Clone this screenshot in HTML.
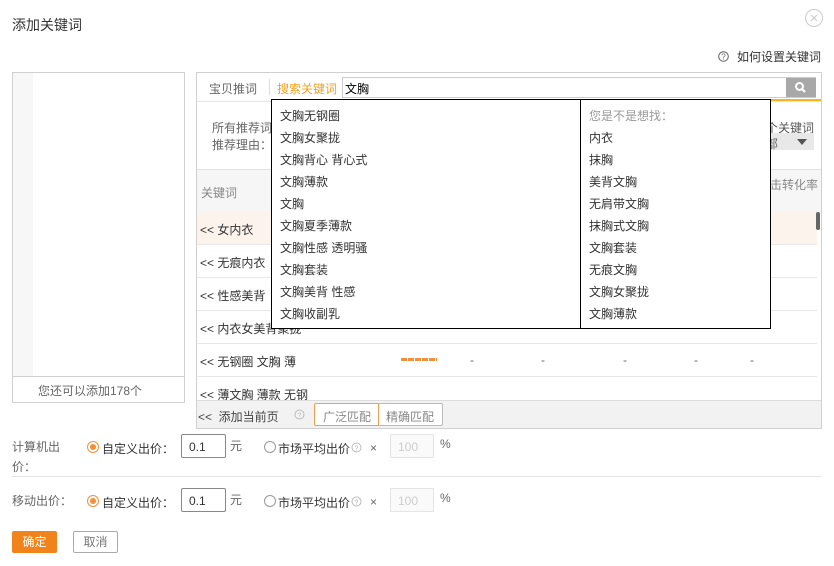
<!DOCTYPE html>
<html><head><meta charset="utf-8"><style>
*{margin:0;padding:0;box-sizing:border-box}
body{width:834px;height:566px;background:#fff;font-family:"Liberation Sans","Noto Sans CJK SC",sans-serif;font-size:12px;color:#333;position:relative;overflow:hidden}
.a{position:absolute;white-space:nowrap}
.g{color:#666}
</style></head><body>
<div class="a" style="left:12px;top:15px;font-size:14px;color:#333">添加关键词</div>
<svg class="a" style="left:804px;top:8px" width="20" height="20"><circle cx="10" cy="10" r="8.5" fill="none" stroke="#ccc"/><path d="M7 7L13 13M13 7L7 13" stroke="#ccc" stroke-width="1.2"/></svg>
<svg class="a" style="left:718px;top:51px" width="11" height="11"><circle cx="5.5" cy="5.5" r="4.8" fill="none" stroke="#666"/><text x="5.5" y="8.5" font-size="8" text-anchor="middle" fill="#666" font-family="Liberation Sans">?</text></svg>
<div class="a" style="left:737px;top:48px;color:#333">如何设置关键词</div>

<div class="a" style="left:12px;top:72px;width:173px;height:331px;border:1px solid #d0d0d0"></div>
<div class="a" style="left:13px;top:73px;width:20px;height:303px;background:#f7f7f7"></div>
<div class="a" style="left:13px;top:376px;width:171px;height:1px;background:#d0d0d0"></div>
<div class="a g" style="left:38px;top:382px">您还可以添加178个</div>

<div class="a" style="left:196px;top:72px;width:626px;height:357px;border:1px solid #d0d0d0"></div>
<div class="a" style="left:197px;top:101px;width:624px;height:1px;background:#e5e5e5"></div>
<div class="a g" style="left:209px;top:80px">宝贝推词</div>
<div class="a" style="left:269px;top:79px;width:1px;height:16px;background:#ddd"></div>
<div class="a" style="left:277px;top:80px;color:#f0a020">搜索关键词</div>
<div class="a" style="left:342px;top:77px;width:474px;height:21px;border:1px solid #ccc"></div>
<div class="a" style="left:345px;top:80px;color:#000">文胸</div>
<div class="a" style="left:786px;top:78px;width:30px;height:19px;background:#a8a8a8"></div>
<svg class="a" style="left:794px;top:81px" width="13" height="13"><circle cx="5.5" cy="5.5" r="3.5" fill="none" stroke="#fff" stroke-width="2"/><path d="M8 8L11 11" stroke="#fff" stroke-width="2.2"/></svg>
<div class="a" style="left:343px;top:99px;width:478px;height:2px;background:#f4b71d"></div>

<div class="a g" style="left:212px;top:119px">所有推荐词</div>
<div class="a g" style="left:212px;top:136px">推荐理由：</div>
<div class="a" style="left:766px;top:119px;color:#555">个关键词</div>
<div class="a" style="left:766px;top:133px;width:48px;height:17px;background:#e8e8e8"></div>
<div class="a g" style="left:766px;top:135px">部</div>
<div class="a" style="left:797px;top:139px;width:0;height:0;border-left:5px solid transparent;border-right:5px solid transparent;border-top:6px solid #555"></div>

<div class="a" style="left:197px;top:169px;width:624px;height:43px;background:#f6f6f6;border-top:1px solid #e2e2e2"></div>
<div class="a" style="left:201px;top:184px;color:#888">关键词</div>
<div class="a" style="left:770px;top:176px;color:#888">击转化率</div>

<div class="a" style="left:197px;top:212px;width:620px;height:32px;background:#fcf3ec"></div>
<div class="a" style="left:816px;top:212px;width:4px;height:18px;background:#666;border-radius:2px"></div>
<div class="a" style="left:200px;top:221px">&lt;&lt; 女内衣</div>
<div class="a" style="left:197px;top:244px;width:620px;height:1px;background:#e8e8e8"></div>
<div class="a" style="left:200px;top:254px">&lt;&lt; 无痕内衣</div>
<div class="a" style="left:197px;top:277px;width:620px;height:1px;background:#e8e8e8"></div>
<div class="a" style="left:200px;top:287px">&lt;&lt; 性感美背</div>
<div class="a" style="left:197px;top:310px;width:620px;height:1px;background:#e8e8e8"></div>
<div class="a" style="left:200px;top:320px">&lt;&lt; 内衣女美背聚拢</div>
<div class="a" style="left:197px;top:343px;width:620px;height:1px;background:#e8e8e8"></div>
<div class="a" style="left:200px;top:353px">&lt;&lt; 无钢圈 文胸 薄</div>
<div class="a" style="left:401px;top:358px;width:36px;height:3px;background:repeating-linear-gradient(90deg,#f0903a 0 6px,#fff 6px 7px)"></div>
<div class="a g" style="left:470px;top:353px">-</div>
<div class="a g" style="left:541px;top:353px">-</div>
<div class="a g" style="left:623px;top:353px">-</div>
<div class="a g" style="left:694px;top:353px">-</div>
<div class="a g" style="left:750px;top:353px">-</div>
<div class="a" style="left:197px;top:376px;width:620px;height:1px;background:#e8e8e8"></div>
<div class="a" style="left:200px;top:386px">&lt;&lt; 薄文胸 薄款 无钢</div>

<div class="a" style="left:197px;top:400px;width:624px;height:28px;background:#f2f2f2;border-top:1px solid #ddd"></div>
<div class="a" style="left:198px;top:408px;color:#444">&lt;&lt;&nbsp; 添加当前页</div>
<svg class="a" style="left:294px;top:409px" width="11" height="11"><circle cx="5.5" cy="5.5" r="4.5" fill="none" stroke="#bbb"/><text x="5.5" y="8.3" font-size="7" text-anchor="middle" fill="#bbb">?</text></svg>
<div class="a" style="left:379px;top:403px;width:64px;height:23px;border:1px solid #bbb;border-left:none;border-radius:0 2px 2px 0;background:#fff"></div>
<div class="a" style="left:314px;top:403px;width:65px;height:23px;border:1px solid #f0a050;border-radius:2px 0 0 2px;background:#fff"></div>
<div class="a" style="left:323px;top:408px;color:#888">广泛匹配</div>
<div class="a" style="left:386px;top:408px;color:#888">精确匹配</div>

<div class="a" style="left:271px;top:99px;width:500px;height:230px;border:1px solid #000;background:#fff"></div>
<div class="a" style="left:580px;top:100px;width:1px;height:228px;background:#000"></div>
<div class="a" style="left:280px;top:105px;line-height:22px;color:#333">文胸无钢圈<br>文胸女聚拢<br>文胸背心 背心式<br>文胸薄款<br>文胸<br>文胸夏季薄款<br>文胸性感 透明骚<br>文胸套装<br>文胸美背 性感<br>文胸收副乳</div>
<div class="a" style="left:589px;top:105px;line-height:22px;color:#333"><span style="color:#999">您是不是想找：</span><br>内衣<br>抹胸<br>美背文胸<br>无肩带文胸<br>抹胸式文胸<br>文胸套装<br>无痕文胸<br>文胸女聚拢<br>文胸薄款</div>

<div class="a g" style="left:12px;top:438px">计算机出</div>
<div class="a g" style="left:12px;top:458px">价：</div>
<div class="a" style="left:87px;top:441px;width:12px;height:12px;border:1px solid #f0903a;border-radius:50%"></div>
<div class="a" style="left:90px;top:444px;width:6px;height:6px;background:#f0903a;border-radius:50%"></div>
<div class="a" style="left:102px;top:440px">自定义出价：</div>
<div class="a" style="left:181px;top:434px;width:45px;height:24px;border:1px solid #888;border-radius:2px"></div>
<div class="a" style="left:189px;top:440px">0.1</div>
<div class="a g" style="left:230px;top:437px">元</div>
<div class="a" style="left:264px;top:441px;width:12px;height:12px;border:1px solid #999;border-radius:50%"></div>
<div class="a" style="left:278px;top:440px">市场平均出价</div>
<svg class="a" style="left:351px;top:442px" width="11" height="11"><circle cx="5.5" cy="5.5" r="4.5" fill="none" stroke="#bbb"/><text x="5.5" y="8.3" font-size="7" text-anchor="middle" fill="#bbb">?</text></svg>
<div class="a g" style="left:370px;top:441px">×</div>
<div class="a" style="left:390px;top:434px;width:44px;height:24px;border:1px solid #e5e5e5;background:#fafafa"></div>
<div class="a" style="left:398px;top:440px;color:#ccc">100</div>
<div class="a g" style="left:440px;top:437px">%</div>
<div class="a" style="left:12px;top:476px;width:809px;height:1px;background:#e5e5e5"></div>

<div class="a g" style="left:12px;top:492px">移动出价：</div>
<div class="a" style="left:87px;top:495px;width:12px;height:12px;border:1px solid #f0903a;border-radius:50%"></div>
<div class="a" style="left:90px;top:498px;width:6px;height:6px;background:#f0903a;border-radius:50%"></div>
<div class="a" style="left:102px;top:494px">自定义出价：</div>
<div class="a" style="left:181px;top:488px;width:45px;height:24px;border:1px solid #888;border-radius:2px"></div>
<div class="a" style="left:189px;top:494px">0.1</div>
<div class="a g" style="left:230px;top:491px">元</div>
<div class="a" style="left:264px;top:495px;width:12px;height:12px;border:1px solid #999;border-radius:50%"></div>
<div class="a" style="left:278px;top:494px">市场平均出价</div>
<svg class="a" style="left:351px;top:496px" width="11" height="11"><circle cx="5.5" cy="5.5" r="4.5" fill="none" stroke="#bbb"/><text x="5.5" y="8.3" font-size="7" text-anchor="middle" fill="#bbb">?</text></svg>
<div class="a g" style="left:370px;top:495px">×</div>
<div class="a" style="left:390px;top:488px;width:44px;height:24px;border:1px solid #e5e5e5;background:#fafafa"></div>
<div class="a" style="left:398px;top:494px;color:#ccc">100</div>
<div class="a g" style="left:440px;top:491px">%</div>

<div class="a" style="left:12px;top:531px;width:45px;height:22px;background:#f0841a;border-radius:2px;color:#fff;text-align:center;line-height:22px">确定</div>
<div class="a" style="left:73px;top:531px;width:45px;height:22px;border:1px solid #aaa;border-radius:2px;color:#777;text-align:center;line-height:20px">取消</div>
</body></html>
